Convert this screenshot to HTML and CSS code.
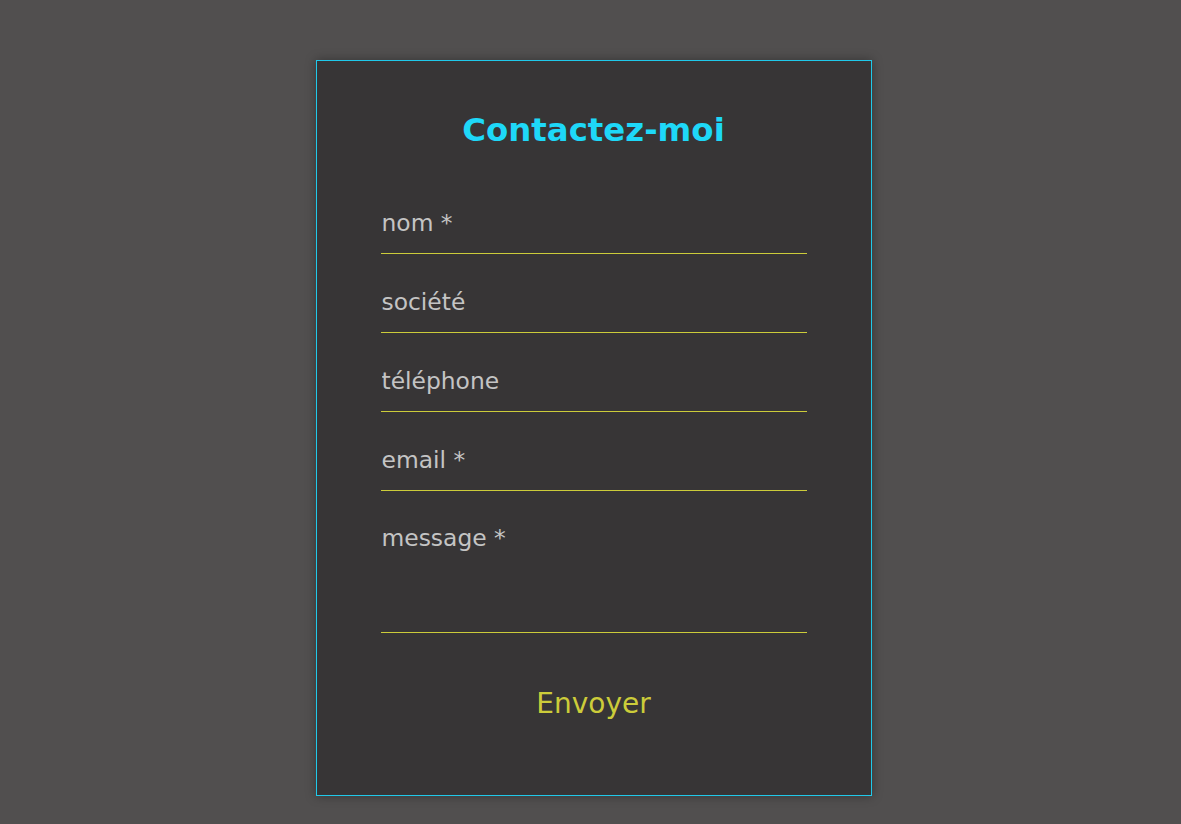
FILE: index.html
```html
<!DOCTYPE html>
<html lang="fr">
<head>
<meta charset="utf-8">
<title>Contactez-moi</title>
<link rel="stylesheet" href="styles.css">
</head>
<body>
<main class="page">
  <form class="card">
    <h1 class="title">Contactez-moi</h1>
    <div class="fields">
      <input class="field" type="text" placeholder="nom *">
      <input class="field" type="text" placeholder="société">
      <input class="field" type="tel" placeholder="téléphone">
      <input class="field" type="email" placeholder="email *">
      <textarea class="field area" placeholder="message *"></textarea>
    </div>
    <button class="send" type="button">Envoyer</button>
  </form>
</main>
</body>
</html>
```
FILE: styles.css
```css
html, body {
  margin: 0;
  padding: 0;
  background: #514f4f;
  height: 100%;
}
body {
  font-family: "DejaVu Sans", Verdana, sans-serif;
}
.page {
  display: flex;
  justify-content: center;
  padding: 60px 0 0 6px;
}
.card {
  box-sizing: border-box;
  width: 556px;
  height: 736px;
  background: #373536;
  border: 1px solid #20c9ea;
  box-shadow: 0 0 10px rgba(0, 0, 0, 0.35);
  padding: 50px 64px 0;
  display: flex;
  flex-direction: column;
  align-items: stretch;
}
.title {
  margin: 0;
  font-size: 32.4px;
  font-weight: bold;
  line-height: 38px;
  text-align: center;
  color: #1ed8f8;
}
.fields {
  margin-top: 50px;
  display: flex;
  flex-direction: column;
  gap: 24px;
}
.field {
  box-sizing: border-box;
  width: 100%;
  height: 55px;
  margin: 0;
  padding: 10px 0 17px 1px;
  border: none;
  border-bottom: 1px solid #cccc3a;
  background: transparent;
  font-family: "DejaVu Sans", Verdana, sans-serif;
  font-size: 23.4px;
  line-height: 27px;
  color: #c6c6c6;
  outline: none;
  resize: none;
}
.field::placeholder {
  color: #c4c4c4;
  opacity: 1;
}
.area {
  height: 118px;
  display: block;
}
.send {
  align-self: center;
  margin-top: 54px;
  padding: 0;
  border: none;
  background: transparent;
  font-family: "DejaVu Sans", Verdana, sans-serif;
  font-size: 28px;
  line-height: 33px;
  color: #cccc3a;
  cursor: pointer;
}
```
